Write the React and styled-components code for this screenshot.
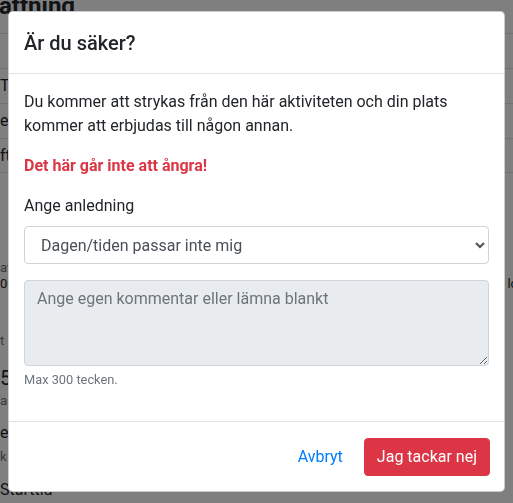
import styled, { createGlobalStyle } from "styled-components";

const GlobalStyle = createGlobalStyle`
  html, body {
    margin: 0;
    padding: 0;
  }
  body {
    font-family: Roboto, "Noto Sans", "Liberation Sans", sans-serif;
    font-size: 16px;
    line-height: 1.5;
    color: #212529;
    background: #fff;
    overflow: hidden;
  }
  * {
    box-sizing: border-box;
  }
`;

// background page (sits behind the backdrop)
const Page = styled.div`
  width: 513px;
  height: 503px;
  overflow: hidden;
  background: #fff;
`;

const PageTitle = styled.h2`
  margin: -9px 0 0 -1px;
  font-size: 24px;
  font-weight: 700;
  line-height: 30px;
  height: 42px;
`;

const Table = styled.div`
  display: flex;
  flex-direction: column;
`;

const TableRow = styled.div`
  height: 35px;
  border-top: 1px solid #dee2e6;
  display: flex;
  align-items: center;
  font-size: 16px;
  &:last-child {
    border-bottom: 1px solid #dee2e6;
  }
`;

const Details = styled.div`
  display: flex;
  flex-direction: column;
  padding-top: 87px;
`;

const DetailLine = styled.div`
  display: flex;
  justify-content: space-between;
  font-size: ${(p) => (p.big ? "20px" : p.small ? "13px" : "16px")};
  line-height: ${(p) => (p.big ? "26px" : p.small ? "16px" : "24px")};
  margin-top: ${(p) => p.gap || 0}px;
  color: ${(p) => (p.muted ? "#6c757d" : "#212529")};
  white-space: nowrap;
`;

const RightBit = styled.span`
  margin-right: -5px;
`;

// modal
const Backdrop = styled.div`
  position: fixed;
  inset: 0;
  background: rgba(0, 0, 0, 0.5);
  padding: 11px 8px 8px;
`;

const Dialog = styled.div`
  background: #fff;
  border: 1px solid rgba(0, 0, 0, 0.2);
  border-radius: 4.8px;
`;

const Header = styled.div`
  padding: 16px 15px 15px;
  border-bottom: 1px solid #dee2e6;
`;

const Title = styled.h5`
  margin: 0;
  font-size: 20px;
  font-weight: 500;
  line-height: 1.5;
`;

const Body = styled.div`
  padding: 16px 15px;
`;

const Text = styled.p`
  margin: 0 0 16px;
  color: ${(p) => (p.danger ? "#dc3545" : "#212529")};
  font-weight: ${(p) => (p.danger ? 700 : 400)};
`;

const FormGroup = styled.div`
  margin-bottom: 16px;
`;

const Label = styled.label`
  display: inline-block;
  margin-bottom: 8px;
`;

const Select = styled.select`
  display: block;
  width: 100%;
  height: 38px;
  padding: 6px 12px;
  font-family: inherit;
  font-size: 16px;
  line-height: 1.5;
  color: #495057;
  background: #fff;
  border: 1px solid #ced4da;
  border-radius: 4px;
`;

const TextArea = styled.textarea`
  display: block;
  width: 100%;
  height: 86px;
  padding: 6px 12px;
  font-family: inherit;
  font-size: 16px;
  line-height: 1.5;
  color: #495057;
  background: #e9ecef;
  border: 1px solid #ced4da;
  border-radius: 4px;
  resize: vertical;
  &::placeholder {
    color: #6c757d;
  }
`;

const Hint = styled.small`
  display: block;
  margin-top: 4px;
  font-size: 12.8px;
  line-height: 1.5;
  color: #6c757d;
`;

const Footer = styled.div`
  display: flex;
  justify-content: flex-end;
  align-items: center;
  padding: 12px 14px 11px 12px;
  border-top: 1px solid #dee2e6;
  gap: 8px;
`;

const Button = styled.button`
  margin: 4px 0;
  padding: 6px 12px;
  font-family: inherit;
  font-size: 16px;
  line-height: 1.5;
  border: 1px solid ${(p) => (p.variant === "danger" ? "#dc3545" : "transparent")};
  border-radius: 4px;
  background: ${(p) => (p.variant === "danger" ? "#dc3545" : "transparent")};
  color: ${(p) => (p.variant === "danger" ? "#fff" : "#007bff")};
  cursor: pointer;
`;

const reasons = [
  "Dagen/tiden passar inte mig",
  "Jag är sjuk",
  "Annan anledning",
];

export default function App() {
  return (
    <>
      <GlobalStyle />
      <Page>
        <PageTitle>attning</PageTitle>
        <Table>
          <TableRow />
          <TableRow>T</TableRow>
          <TableRow>er</TableRow>
          <TableRow>ft</TableRow>
        </Table>
        <Details>
          <DetailLine small muted>av</DetailLine>
          <DetailLine small>
            <span>00</span>
            <RightBit>lo</RightBit>
          </DetailLine>
          <DetailLine small muted gap={41}>t r</DetailLine>
          <DetailLine big gap={16}>5</DetailLine>
          <DetailLine small muted gap={2}>ar</DetailLine>
          <DetailLine gap={12}>ec</DetailLine>
          <DetailLine small muted gap={4}>k</DetailLine>
          <DetailLine gap={13}>Starttid</DetailLine>
        </Details>
      </Page>

      <Backdrop>
        <Dialog>
          <Header>
            <Title>Är du säker?</Title>
          </Header>
          <Body>
            <Text>
              Du kommer att strykas från den här aktiviteten och din plats
              kommer att erbjudas till någon annan.
            </Text>
            <Text danger>Det här går inte att ångra!</Text>
            <FormGroup>
              <Label>Ange anledning</Label>
              <Select defaultValue={reasons[0]}>
                {reasons.map((r) => (
                  <option key={r}>{r}</option>
                ))}
              </Select>
            </FormGroup>
            <FormGroup>
              <TextArea
                rows={3}
                disabled
                placeholder="Ange egen kommentar eller lämna blankt"
              />
              <Hint>Max 300 tecken.</Hint>
            </FormGroup>
          </Body>
          <Footer>
            <Button>Avbryt</Button>
            <Button variant="danger">Jag tackar nej</Button>
          </Footer>
        </Dialog>
      </Backdrop>
    </>
  );
}
